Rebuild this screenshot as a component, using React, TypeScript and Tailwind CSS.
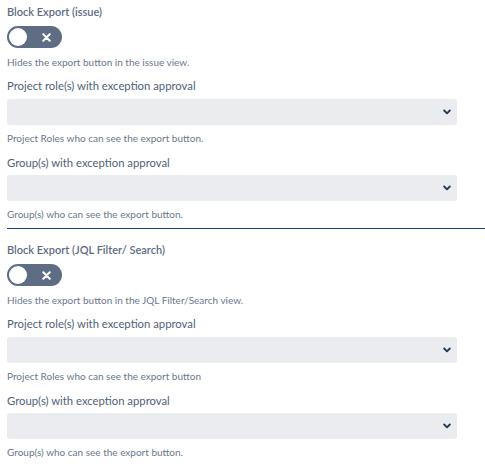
import React from "react";

function Toggle() {
  return (
    <div className="relative flex h-[22px] w-[55px] items-center rounded-full bg-[#5e6c84] px-[2px]">
      <div className="h-[18px] w-[18px] rounded-full bg-white" />
      <svg className="absolute left-[35px] top-[6.5px]" width="9" height="9" viewBox="0 0 9 9">
        <path d="M1.3 1.3 L7.7 7.7 M7.7 1.3 L1.3 7.7" stroke="white" strokeWidth="2.1" strokeLinecap="round" />
      </svg>
    </div>
  );
}

function Select({ className }: { className: string }) {
  return (
    <div className={`${className} flex h-[26px] w-[450px] items-center justify-end rounded-[3px] bg-[#ebecf0] pr-[6px]`}>
      <svg width="8" height="6" viewBox="0 0 8 6">
        <path d="M1.2 1.5 L4 4.3 L6.8 1.5" fill="none" stroke="#253858" strokeWidth="1.9" strokeLinecap="round" strokeLinejoin="round" />
      </svg>
    </div>
  );
}

function Section({ title, desc, roleDesc }: { title: string; desc: string; roleDesc: string }) {
  return (
    <div className="flex flex-col items-start">
      <div className="pt-[4px] text-[11px] font-semibold leading-[16px] text-[#5e6c84]">{title}</div>
      <div className="mt-[6px]">
        <Toggle />
      </div>
      <div className="mt-[7px] text-[10px] leading-[14px] text-[#6b778c]">{desc}</div>
      <div className="mt-[9px] text-[11.3px] font-normal leading-[16px] text-[#505f79]">
        Project role(s) with exception approval
      </div>
      <Select className="mt-[5px]" />
      <div className="mt-[6px] text-[10px] leading-[14px] text-[#6b778c]">{roleDesc}</div>
      <div className="mt-[10px] text-[11.3px] font-normal leading-[16px] text-[#505f79]">
        Group(s) with exception approval
      </div>
      <Select className="mt-[4px]" />
      <div className="mt-[6px] text-[10px] leading-[14px] text-[#6b778c]">Group(s) who can see the export button.</div>
    </div>
  );
}

export default function App() {
  return (
    <div className="min-h-[467px] bg-white pl-[7px] font-[Lato,sans-serif]">
      <Section
        title="Block Export (issue)"
        desc="Hides the export button in the issue view."
        roleDesc="Project Roles who can see the export button."
      />
      <div className="mt-[7px] h-px bg-[#163f88]" />
      <div className="mt-[9px]">
        <Section
          title="Block Export (JQL Filter/ Search)"
          desc="Hides the export button in the JQL Filter/Search view."
          roleDesc="Project Roles who can see the export button"
        />
      </div>
    </div>
  );
}
